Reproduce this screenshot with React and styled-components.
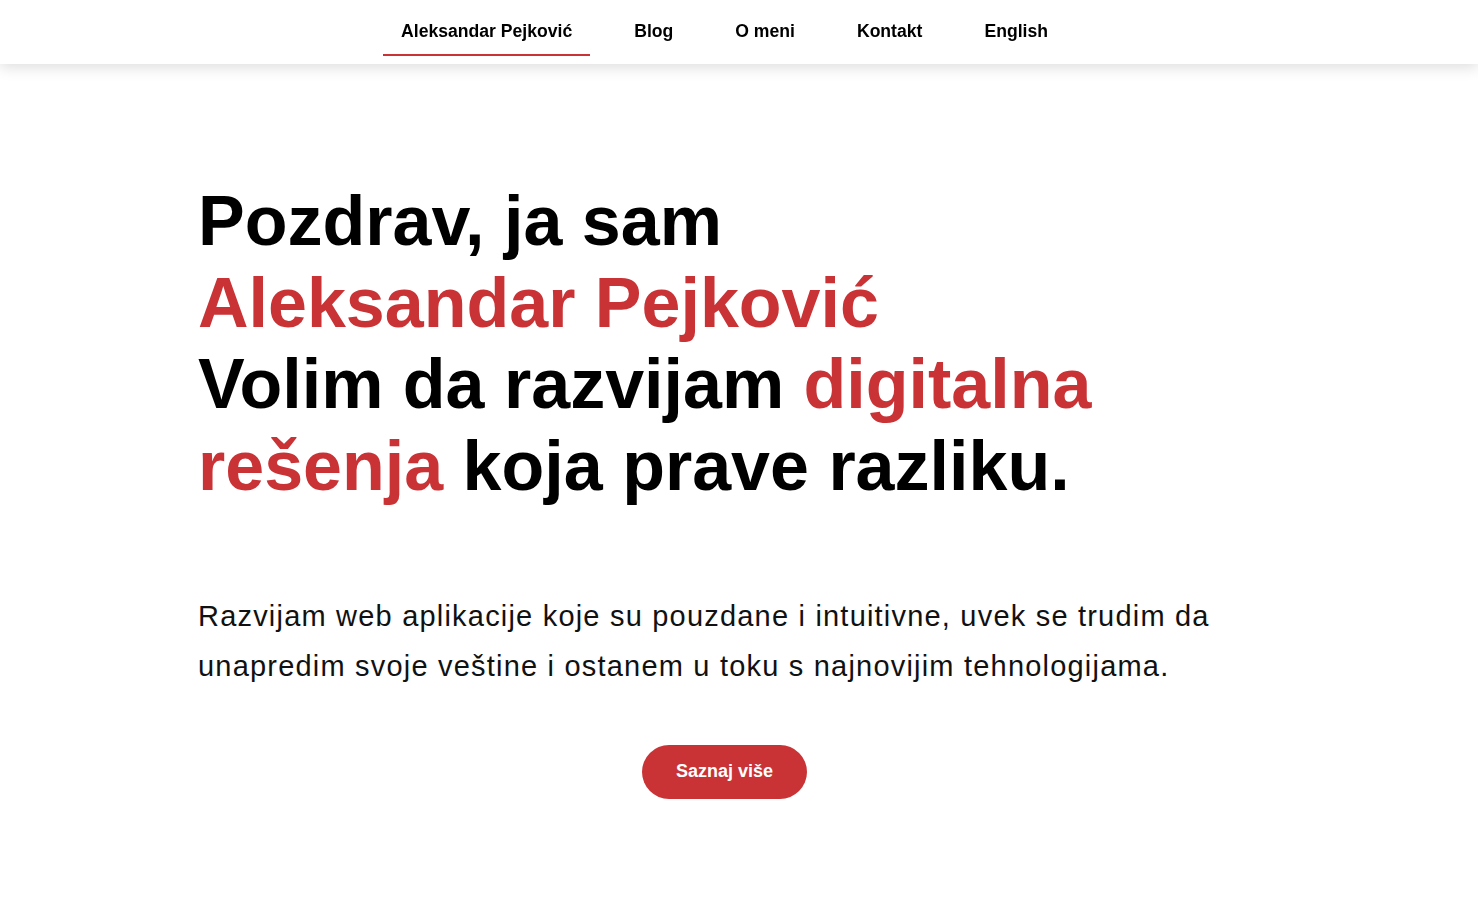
import React from 'react';
import styled, { createGlobalStyle } from 'styled-components';

const GlobalStyle = createGlobalStyle`
  body {
    margin: 0;
    background: #ffffff;
    font-family: "Liberation Sans", Arial, sans-serif;
    color: #000;
  }
`;

const Page = styled.div`
  padding-right: 29px;
`;

const NavBar = styled.nav`
  position: fixed;
  top: 0;
  left: 0;
  right: 0;
  height: 64px;
  background: #fff;
  box-shadow: 0 3px 14px rgba(0, 0, 0, 0.14);
  z-index: 10;
`;

const NavList = styled.ul`
  list-style: none;
  margin: 0;
  padding: 0 29px 0 0;
  height: 100%;
  display: flex;
  justify-content: center;
  align-items: stretch;
  gap: 26px;
`;

const NavItem = styled.li`
  display: flex;
`;

const NavLink = styled.a`
  display: flex;
  align-items: center;
  padding: 9px 18px 0;
  font-size: 17.6px;
  font-weight: 700;
  color: #000;
  text-decoration: none;
  border-bottom: 2px solid ${(p) => (p.$active ? '#c93336' : 'transparent')};
  margin-bottom: 8px;
`;

const Hero = styled.section`
  width: 1053px;
  margin: 0 auto;
  padding-top: 181px;
  padding-bottom: 100px;
`;

const Heading = styled.h1`
  margin: 0;
  font-size: 70px;
  line-height: 81.5px;
  font-weight: 700;
`;

const Accent = styled.span`
  color: #c93336;
`;

const Lead = styled.p`
  margin: 84px 0 0;
  font-size: 29px;
  letter-spacing: 1.2px;
  line-height: 50.4px;
  color: #111;
`;

const Actions = styled.div`
  display: flex;
  justify-content: center;
  margin-top: 53px;
`;

const Button = styled.a`
  display: inline-flex;
  align-items: center;
  justify-content: center;
  width: 165px;
  height: 54px;
  border-radius: 27px;
  background: #c93336;
  color: #fff;
  font-size: 18px;
  font-weight: 700;
  text-decoration: none;
`;

const links = [
  { label: 'Aleksandar Pejković', active: true },
  { label: 'Blog' },
  { label: 'O meni' },
  { label: 'Kontakt' },
  { label: 'English' },
];

const App = () => {
  return (
    <Page>
      <GlobalStyle />
      <NavBar>
        <NavList>
          {links.map((l) => (
            <NavItem key={l.label}>
              <NavLink href="#" $active={l.active}>
                {l.label}
              </NavLink>
            </NavItem>
          ))}
        </NavList>
      </NavBar>
      <Hero>
        <Heading>
          Pozdrav, ja sam
          <br />
          <Accent>Aleksandar Pejković</Accent>
          <br />
          Volim da razvijam <Accent>digitalna rešenja</Accent> koja prave razliku.
        </Heading>
        <Lead>
          Razvijam web aplikacije koje su pouzdane i intuitivne, uvek se trudim da
          unapredim svoje veštine i ostanem u toku s najnovijim tehnologijama.
        </Lead>
        <Actions>
          <Button href="#">Saznaj više</Button>
        </Actions>
      </Hero>
    </Page>
  );
};

export default App;
